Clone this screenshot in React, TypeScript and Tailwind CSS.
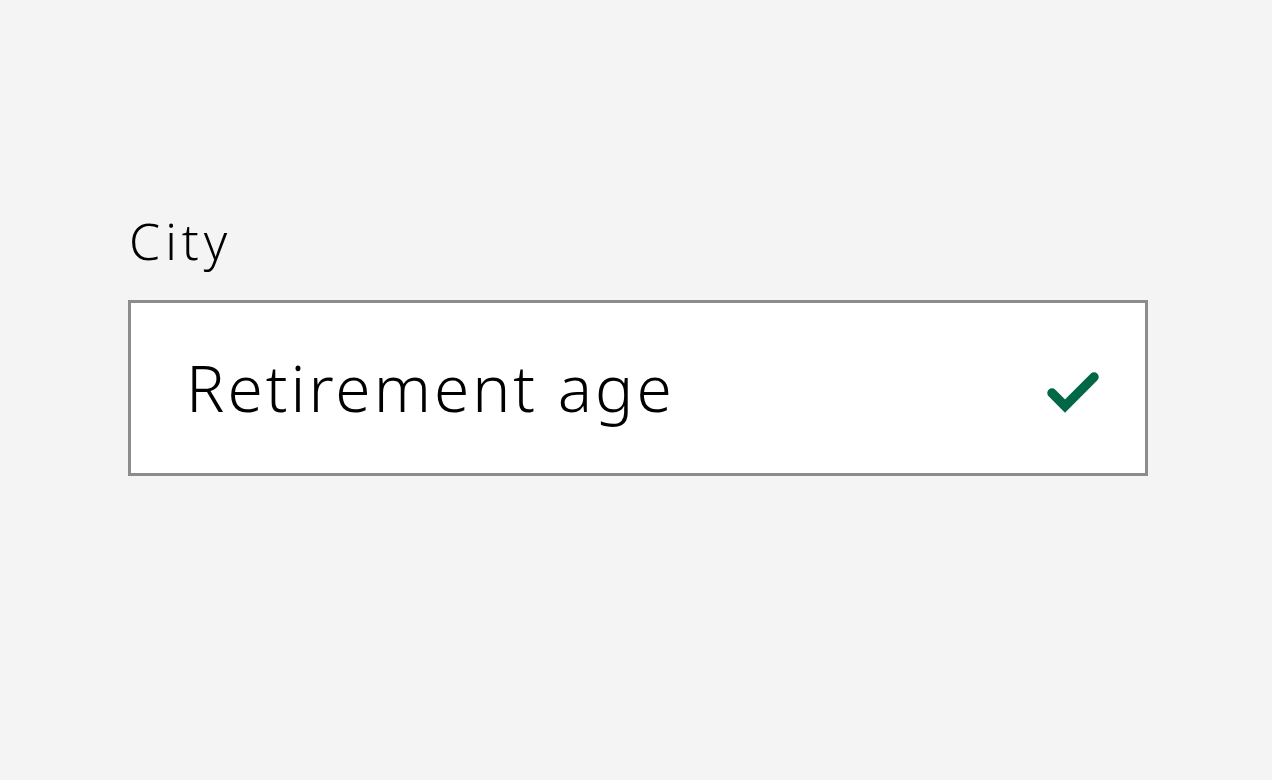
export default function App() {
  return (
    <div className="min-h-[780px] w-full bg-[#f4f4f4] pl-[128px] pr-[125px] pt-[211px] font-['Noto_Sans',sans-serif] text-black">
      <label className="block pl-[1px] text-[50px] font-[350] leading-[61px] tracking-[5px]">City</label>
      <div className="mt-[28px] flex h-[176px] w-[1020px] items-center justify-between border-[3px] border-[#8c8c8e] bg-white pl-[55px] pr-[46px]">
        <span className="text-[64px] font-[350] leading-none tracking-[3px]">Retirement age</span>
        <svg width="52" height="42" viewBox="0 0 52 42" className="mt-[10px] shrink-0">
          <path d="M5 21 L18 34 L47 5" fill="none" stroke="#006747" strokeWidth="9.5" strokeLinecap="round" strokeLinejoin="miter" />
        </svg>
      </div>
    </div>
  );
}
